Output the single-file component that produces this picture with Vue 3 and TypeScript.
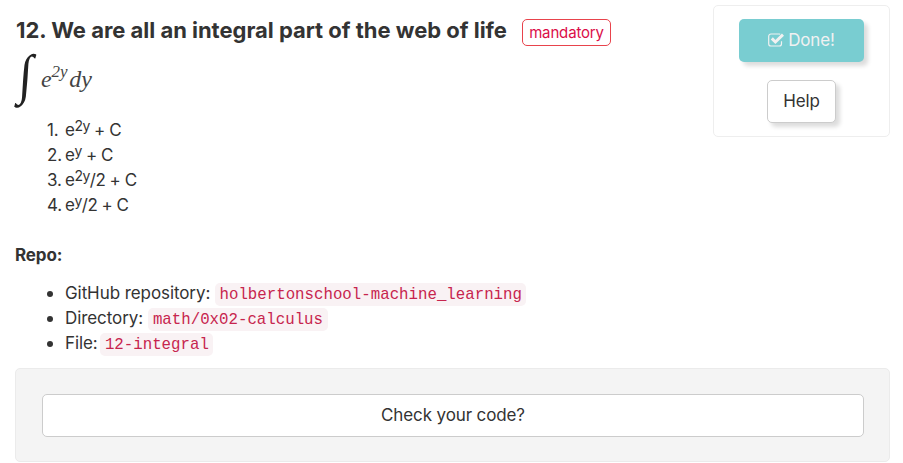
<script setup lang="ts">
interface Term { exponent: string; rest: string }
interface RepoItem { label: string; value: string; labelWidth: number }

const choices: Term[] = [
  { exponent: '2y', rest: ' + C' },
  { exponent: 'y', rest: ' + C' },
  { exponent: '2y', rest: '/2 + C' },
  { exponent: 'y', rest: '/2 + C' },
]
const repo: RepoItem[] = [
  { label: 'GitHub repository:', value: 'holbertonschool-machine_learning', labelWidth: 150 },
  { label: 'Directory:', value: 'math/0x02-calculus', labelWidth: 83.4 },
  { label: 'File:', value: '12-integral', labelWidth: 35.4 },
]
</script>

<template>
  <main class="task">
    <div class="top">
      <section class="content">
        <header class="heading">
          <h4>12. We are all an integral part of the web of life</h4>
          <span class="label">mandatory</span>
        </header>
        <div class="formula">
          <span class="integral">∫</span>
          <span class="integrand">e<sup>2y</sup><span class="dy">dy</span></span>
        </div>
        <ol class="choices">
          <li v-for="(choice, i) in choices" :key="i">
            <span class="number">{{ i + 1 }}.</span>
            <span class="term">e<sup>{{ choice.exponent }}</sup>{{ choice.rest }}</span>
          </li>
        </ol>
      </section>
      <aside class="actions">
        <button class="btn done">
          <svg class="check" viewBox="0 0 16 14" fill="none">
            <path d="M12.2 1.3A2.2 2.2 0 0 0 11.2 1H3A2.3 2.3 0 0 0 .7 3.3v7.4A2.3 2.3 0 0 0 3 13h8.2a2.3 2.3 0 0 0 2.3-2.3V8.2" stroke="currentColor" stroke-width="1.2" />
            <path d="M3.8 5.4 7.4 9 15 1.6" stroke="currentColor" stroke-width="3" />
          </svg>
          <span>Done!</span>
        </button>
        <button class="btn help">Help</button>
      </aside>
    </div>
    <p class="repo-title">Repo:</p>
    <ul class="repo">
      <li v-for="item in repo" :key="item.label">
        <span class="bullet"></span>
        <span class="repo-label" :style="{ width: item.labelWidth + 'px' }">{{ item.label }}</span>
        <code>{{ item.value }}</code>
      </li>
    </ul>
    <footer class="well">
      <button class="btn check-code"><span>Check your code?</span></button>
    </footer>
  </main>
</template>

<style>
body { background: #fff; }
</style>

<style scoped>
* { box-sizing: border-box; }
.task {
  height: 463px;
  padding: 5px 13px 0 15px;
  overflow: hidden;
  color: #333;
  font: 17px/25px Inter, "Liberation Sans", sans-serif;
  letter-spacing: -0.12px;
}
.top { display: flex; justify-content: space-between; height: 238px; }
.heading { display: flex; align-items: flex-start; gap: 15px; padding-top: 12px; }
h4 {
  width: 492px;
  margin: 0;
  padding-left: 1px;
  font-size: 22px;
  font-weight: 700;
  line-height: 27px;
  letter-spacing: -0.02px;
  white-space: nowrap;
}
.label {
  width: 89px;
  height: 27px;
  margin-top: 2px;
  border: 1px solid #e8434c;
  border-radius: 5px;
  color: #db0d48;
  font-size: 15px;
  line-height: 26px;
  letter-spacing: -0.15px;
  text-align: center;
}
.formula {
  display: flex;
  height: 60px;
  margin-top: 3px;
  color: #444;
  font-family: "Liberation Serif", serif;
}
.integral {
  width: 26px;
  color: #222;
  font-size: 49px;
  line-height: 60px;
  transform: translate(4px, -4px) skewX(-4deg) scaleY(1.12);
}
.integrand { font-size: 24px; font-style: italic; line-height: 61px; white-space: nowrap; }
.integrand sup { font-size: 17px; line-height: 0; vertical-align: 10px; }
.dy { margin-left: 2px; }
ol, ul { margin: 0; padding: 0; list-style: none; }
.choices { margin-top: 9px; padding-left: 32px; }
li { display: flex; height: 25px; white-space: nowrap; }
.number { width: 18px; }
.term { letter-spacing: -0.5px; white-space: pre; }
.term sup { font-size: 14px; line-height: 0; vertical-align: 5px; }
.actions {
  display: flex;
  flex-direction: column;
  align-items: center;
  gap: 18px;
  width: 177px;
  height: 132px;
  padding-top: 13px;
  border: 1px solid #eee;
  border-radius: 5px;
}
.btn {
  display: flex;
  align-items: center;
  justify-content: center;
  height: 43px;
  padding: 0;
  border: 1px solid #ccc;
  border-radius: 5px;
  background: #fff;
  color: #333;
  font: inherit;
  letter-spacing: inherit;
}
.done {
  gap: 4px;
  width: 125px;
  border: 0;
  background: #79cdd1;
  color: #f1f1f1;
  box-shadow: 4px 4px 4px #ddd;
}
.check { width: 16px; height: 14px; margin-bottom: 2px; }
.help { width: 69px; box-shadow: 4px 4px 4px #ddd; }
.repo-title { margin: 0 0 13px; font-weight: 700; }
.repo { padding-left: 32px; }
.repo li { align-items: center; }
.bullet { width: 6px; height: 6px; margin-right: 12px; border-radius: 50%; background: #333; }
.repo-label { letter-spacing: -0.08px; }
code {
  height: 23px;
  margin-top: 1px;
  padding: 0 4.5px;
  border-radius: 5px;
  background: #f9f2f4;
  color: #c7254e;
  font: 15.75px/24px "Liberation Mono", monospace;
  letter-spacing: 0;
}
.well {
  height: 94px;
  margin-top: 12px;
  padding: 25px 25px 0 26px;
  border: 1px solid #ebebeb;
  border-radius: 5px;
  background: #f4f4f4;
}
.check-code { width: 100%; }
</style>
